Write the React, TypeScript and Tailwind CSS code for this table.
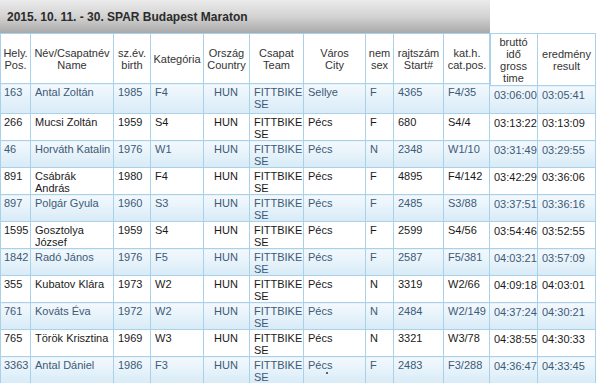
import React from "react";

type Row = {
  pos: string;
  name: string[];
  birth: string;
  cat: string;
  city: string;
  sex: string;
  start: string;
  catPos: string;
  gross: string;
  result: string;
};

const rows: Row[] = [
  { pos: "163", name: ["Antal Zoltán"], birth: "1985", cat: "F4", city: "Sellye", sex: "F", start: "4365", catPos: "F4/35", gross: "03:06:00", result: "03:05:41" },
  { pos: "266", name: ["Mucsi Zoltán"], birth: "1959", cat: "S4", city: "Pécs", sex: "F", start: "680", catPos: "S4/4", gross: "03:13:22", result: "03:13:09" },
  { pos: "46", name: ["Horváth Katalin"], birth: "1976", cat: "W1", city: "Pécs", sex: "N", start: "2348", catPos: "W1/10", gross: "03:31:49", result: "03:29:55" },
  { pos: "891", name: ["Csábrák", "András"], birth: "1980", cat: "F4", city: "Pécs", sex: "F", start: "4895", catPos: "F4/142", gross: "03:42:29", result: "03:36:06" },
  { pos: "897", name: ["Polgár Gyula"], birth: "1960", cat: "S3", city: "Pécs", sex: "F", start: "2485", catPos: "S3/88", gross: "03:37:51", result: "03:36:16" },
  { pos: "1595", name: ["Gosztolya", "József"], birth: "1959", cat: "S4", city: "Pécs", sex: "F", start: "2599", catPos: "S4/56", gross: "03:54:46", result: "03:52:55" },
  { pos: "1842", name: ["Radó János"], birth: "1976", cat: "F5", city: "Pécs", sex: "F", start: "2587", catPos: "F5/381", gross: "04:03:21", result: "03:57:09" },
  { pos: "355", name: ["Kubatov Klára"], birth: "1973", cat: "W2", city: "Pécs", sex: "N", start: "3319", catPos: "W2/66", gross: "04:09:18", result: "04:03:01" },
  { pos: "761", name: ["Kováts Éva"], birth: "1972", cat: "W2", city: "Pécs", sex: "N", start: "2484", catPos: "W2/149", gross: "04:37:24", result: "04:30:21" },
  { pos: "765", name: ["Török Krisztina"], birth: "1969", cat: "W3", city: "Pécs", sex: "N", start: "3321", catPos: "W3/78", gross: "04:38:55", result: "04:30:33" },
  { pos: "3363", name: ["Antal Dániel"], birth: "1986", cat: "F3", city: "Pécs", sex: "F", start: "2483", catPos: "F3/288", gross: "04:36:47", result: "04:33:45" },
];

const th = "border border-[#a9d1ea] px-[2px] text-center align-middle font-normal text-[#333] leading-[12px]";

// odd rows get the light blue gradient and muted blue text
function cellClass(shaded: boolean) {
  return shaded
    ? "border border-[#a9d1ea] pl-[4px] pr-[1px] pt-[2px] align-top leading-[12px] whitespace-nowrap text-[#3d5a78] bg-gradient-to-b from-[#f3f9fd] to-[#d8ebf7]"
    : "border border-[#a9d1ea] pl-[4px] pr-[1px] pt-[2px] align-top leading-[12px] whitespace-nowrap text-[#1a1a1a] bg-white";
}

function ResultsTable() {
  return (
    <table className="w-[490px] table-fixed border-collapse">
      <colgroup>
        <col className="w-[30px]" />
        <col className="w-[83px]" />
        <col className="w-[37px]" />
        <col className="w-[53px]" />
        <col className="w-[46px]" />
        <col className="w-[54px]" />
        <col className="w-[62px]" />
        <col className="w-[28px]" />
        <col className="w-[50px]" />
        <col className="w-[47px]" />
      </colgroup>
      <thead>
        <tr className="h-[50px]">
          <th className={th}>Hely.<br />Pos.</th>
          <th className={th}>Név/Csapatnév<br />Name</th>
          <th className={th}>sz.év.<br />birth</th>
          <th className={th}>Kategória</th>
          <th className={th}>Ország<br />Country</th>
          <th className={th}>Csapat<br />Team</th>
          <th className={th}>Város<br />City</th>
          <th className={th}>nem<br />sex</th>
          <th className={th}>rajtszám<br />Start#</th>
          <th className={th}>kat.h.<br />cat.pos.</th>
        </tr>
      </thead>
      <tbody>
        {rows.map((r, i) => {
          const td = cellClass(i % 2 === 0);
          const last = i === rows.length - 1;
          return (
            <tr key={r.pos} className={i === 0 ? "h-[30px]" : "h-[27px]"}>
              <td className={td + " !pl-[3px]"}>{r.pos}</td>
              <td className={td}>
                {r.name.map((n) => (
                  <div key={n}>{n}</div>
                ))}
              </td>
              <td className={td}>{r.birth}</td>
              <td className={td}>{r.cat}</td>
              <td className={td + " text-center !pl-0"}>HUN</td>
              <td className={td}>
                FITTBIKE
                <br />
                SE
              </td>
              <td className={td}>
                {r.city}
                {last && <div className="ml-[18px] mt-[1px] h-[2px] w-[2px] rounded-full bg-[#333]" />}
              </td>
              <td className={td}>{r.sex}</td>
              <td className={td}>{r.start}</td>
              <td className={td}>{r.catPos}</td>
            </tr>
          );
        })}
      </tbody>
    </table>
  );
}

function TimesTable() {
  return (
    <table className="w-[106px] table-fixed border-collapse">
      <colgroup>
        <col className="w-[48px]" />
        <col className="w-[58px]" />
      </colgroup>
      <thead>
        <tr className="h-[52px]">
          <th className={th}>bruttó<br />idő<br />gross<br />time</th>
          <th className={th}>eredmény<br />result</th>
        </tr>
      </thead>
      <tbody>
        {rows.map((r, i) => {
          const td = cellClass(i % 2 === 0);
          return (
            <tr key={r.pos} className={i === 0 ? "h-[28px]" : "h-[27px]"}>
              <td className={td + " !pt-[3px]"}>{r.gross}</td>
              <td className={td + " !pt-[3px]"}>{r.result}</td>
            </tr>
          );
        })}
      </tbody>
    </table>
  );
}

export default function App() {
  return (
    <div className="h-[383px] w-[600px] overflow-hidden bg-white font-['Liberation_Sans',Arial,sans-serif] text-[11px]">
      <div className="flex items-start">
        <div className="flex w-[490px] flex-col">
          <div className="flex h-[33px] items-center bg-gradient-to-b from-[#ebebeb] via-[#d3d3d3] to-[#a9a9a9] pl-[7px] text-[12px] font-bold text-[#2b2b2b]">
            2015. 10. 11. - 30. SPAR Budapest Maraton
          </div>
          <ResultsTable />
        </div>
        <div className="-ml-[1px] pt-[33px]">
          <TimesTable />
        </div>
      </div>
    </div>
  );
}
